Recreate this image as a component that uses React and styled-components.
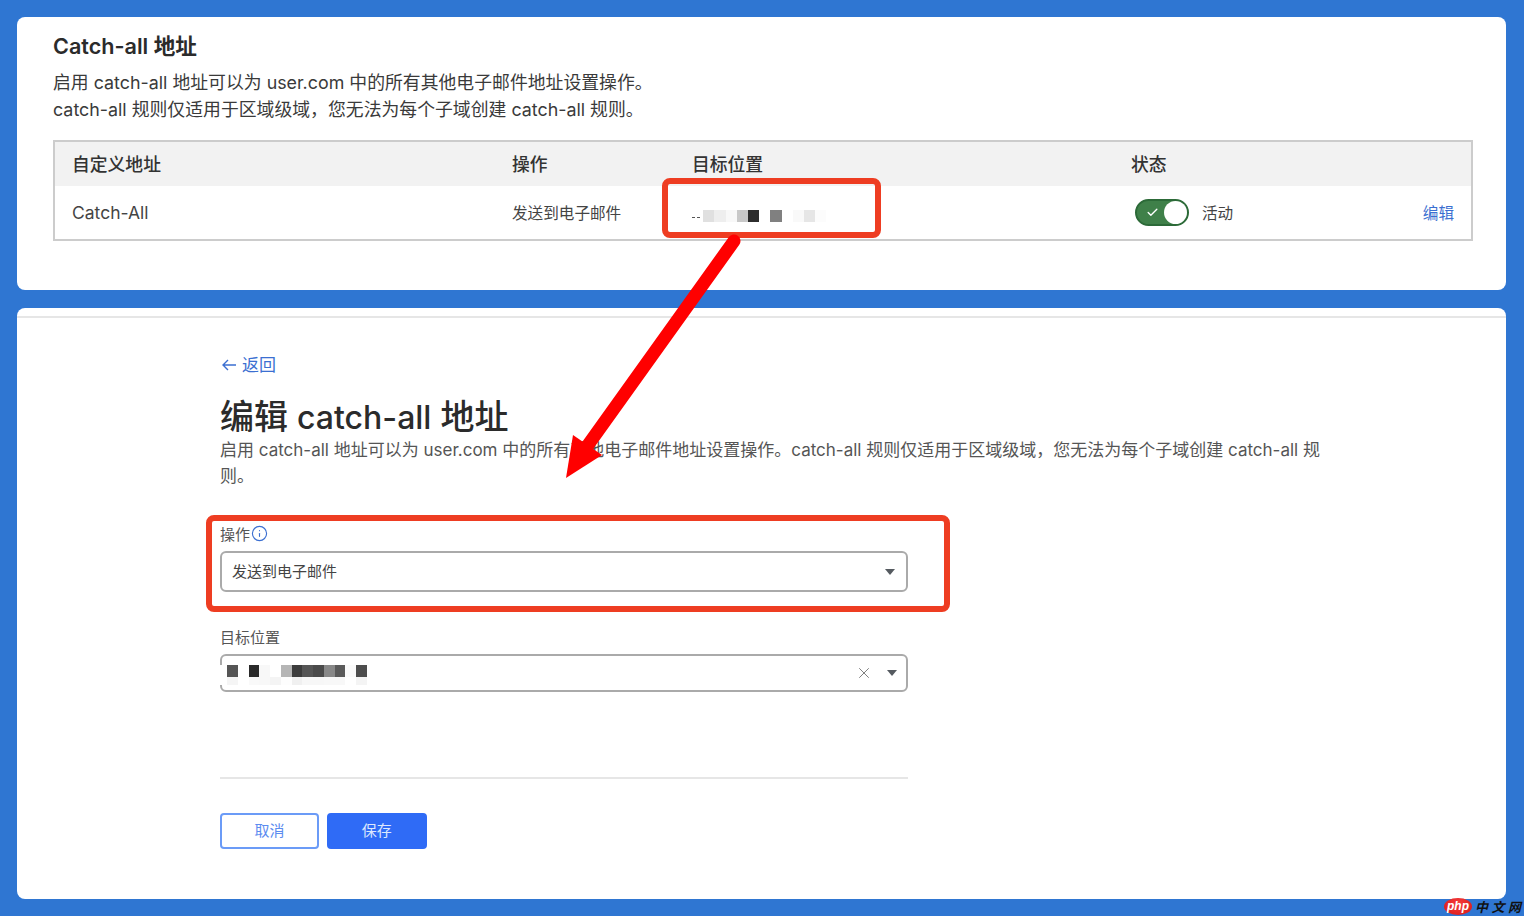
import React from "react";
import styled, { createGlobalStyle } from "styled-components";
import { Check, Info, X } from "lucide-react";

const GlobalStyle = createGlobalStyle`
  html, body { margin: 0; padding: 0; }
  body {
    width: 1524px;
    height: 916px;
    overflow: hidden;
    background: #2f76d2;
    font-family: Inter, "Noto Sans CJK SC", sans-serif;
    color: #333;
  }
`;

const Page = styled.div`
  position: relative;
  width: 1524px;
  height: 916px;
  box-sizing: border-box;
  padding: 17px 18px 17px 17px;
  display: flex;
  flex-direction: column;
  gap: 18px;
  overflow: hidden;
`;

const Card = styled.section`
  background: #fff;
  border-radius: 8px;
  box-sizing: border-box;
  height: ${(p) => p.$height}px;
`;

const TopCard = styled(Card)`
  padding: 14px 33px 0 36px;
`;

const CardTitle = styled.h2`
  margin: 0;
  font-size: 21.6px;
  line-height: 30px;
  font-weight: 600;
  color: #2b2b2b;
`;

const Intro = styled.p`
  margin: 8px 0 0;
  font-size: 17.85px;
  line-height: 27px;
  color: #3a3a3a;
`;

const Table = styled.div`
  margin-top: 17px;
  height: 101px;
  box-sizing: border-box;
  border: 2px solid #ccc;
`;

const Row = styled.div`
  display: grid;
  grid-template-columns: 440px 180px 439px 1fr;
  align-items: center;
  box-sizing: border-box;
  padding: 0 17px ${(p) => (p.$head ? "2px" : "0")};
  height: ${(p) => p.$height}px;
  background: ${(p) => (p.$head ? "#f2f2f2" : "#fff")};
  font-size: ${(p) => (p.$head ? "17.8px" : "15.6px")};
  font-weight: ${(p) => (p.$head ? 500 : 400)};
  color: ${(p) => (p.$head ? "#333" : "#444")};
`;

const AllCell = styled.span`
  font-size: 17.5px;
`;

const CellText = styled.span`
  padding-bottom: 2px;
`;

const StatusCell = styled.div`
  display: flex;
  align-items: center;
  padding-left: 4px;
  gap: 13px;
`;

const Toggle = styled.div`
  width: 54px;
  height: 27px;
  box-sizing: border-box;
  border: 2px solid #2c6a38;
  border-radius: 14px;
  background: #3f8049;
  display: flex;
  align-items: center;
  justify-content: space-between;
  padding: 0 0 0 9px;
  color: #fff;
`;

const Knob = styled.span`
  width: 23px;
  height: 23px;
  border-radius: 50%;
  background: #fff;
`;

const EditLink = styled.a`
  margin-left: auto;
  padding-bottom: 2px;
  color: #3b6fd1;
  font-size: 15.6px;
`;

const Mosaic = styled.div`
  display: flex;
  height: ${(p) => p.$height}px;
  margin-top: ${(p) => p.$top || 0}px;
  margin-left: ${(p) => p.$left || 0}px;
`;

const Cell = styled.span`
  width: ${(p) => p.$w}px;
  height: 100%;
  background: ${(p) => p.$c};
`;

const Dots = styled.span`
  width: 11.3px;
  height: 100%;
  display: flex;
  align-items: center;
  gap: 2px;
  padding-top: 3px;
  box-sizing: border-box;
  &::before, &::after {
    content: "";
    width: 3px;
    height: 1px;
    background: #555;
  }
`;

const BottomCard = styled(Card)`
  padding-top: 8px;
`;

const TopLine = styled.div`
  height: 2px;
  background: #e6e6e6;
`;

const Form = styled.div`
  padding-left: 203px;
  width: 1110px;
`;

const BackLink = styled.a`
  margin-top: 35px;
  display: flex;
  align-items: center;
  gap: 6px;
  height: 22px;
  box-sizing: border-box;
  padding: 0 0 2px 2px;
  font-size: 17px;
  color: #3b6fd1;
  & svg { margin-top: 3px; }
`;

const PageTitle = styled.h1`
  margin: 20px 0 0;
  font-size: 34px;
  line-height: 43px;
  font-weight: 500;
  color: #2b2b2b;
  white-space: nowrap;
`;

const TitleLatin = styled.span`
  font-size: 32px;
  line-height: 1;
`;

const Desc = styled.p`
  margin: -1px 0 0;
  width: 1105px;
  font-size: 17px;
  line-height: 26px;
  color: #555;
`;

const Label = styled.div`
  margin-top: 35px;
  display: flex;
  align-items: center;
  gap: 1px;
  height: 20px;
  box-sizing: border-box;
  padding-bottom: 2px;
  font-size: 15px;
  color: #555;
  & svg { color: #3b6fd1; }
`;

const Select = styled.div`
  margin-top: 7px;
  width: 688px;
  height: ${(p) => p.$height}px;
  box-sizing: border-box;
  border: 2px solid #aaa;
  border-radius: 6px;
  display: flex;
  align-items: center;
  padding: 0 ${(p) => p.$right}px 0 ${(p) => p.$left}px;
  font-size: 15px;
  color: #444;
`;

const SelectValue = styled.div`
  flex: 1;
  padding-bottom: 3px;
`;

const PixelValue = styled.div`
  flex: 1;
  margin-top: 4px;
`;

const Caret = styled.span`
  width: 0;
  height: 0;
  border-left: 5.5px solid transparent;
  border-right: 5.5px solid transparent;
  border-top: 6px solid #555a60;
`;

const Clear = styled.span`
  display: flex;
  margin-right: 14px;
  color: #777;
`;

const Divider = styled.div`
  margin-top: 85px;
  width: 688px;
  height: 2px;
  background: #e6e6e6;
`;

const Actions = styled.div`
  margin-top: 34px;
  display: flex;
  gap: 8px;
`;

const Button = styled.button`
  width: ${(p) => p.$width}px;
  height: 36px;
  box-sizing: border-box;
  border: 2px solid ${(p) => (p.$primary ? "#2f6bf6" : "#6b9bf7")};
  border-radius: 4px;
  background: ${(p) => (p.$primary ? "#2f6bf6" : "#fff")};
  color: ${(p) => (p.$primary ? "#dce7fd" : "#5b8cf0")};
  font-family: inherit;
  font-size: 15px;
  padding: 0 0 3px;
`;

const Highlight = styled.div`
  position: absolute;
  left: ${(p) => p.$x}px;
  top: ${(p) => p.$y}px;
  width: ${(p) => p.$w}px;
  height: ${(p) => p.$h}px;
  box-sizing: border-box;
  border: 6px solid #ee3d22;
  border-radius: 8px;
`;

const ArrowLayer = styled.svg`
  position: absolute;
  left: 0;
  top: 0;
  width: 1524px;
  height: 916px;
  pointer-events: none;
`;

const Watermark = styled.div`
  position: absolute;
  left: 1444px;
  top: 898px;
  display: flex;
  align-items: center;
  gap: 3px;
`;

const PhpBadge = styled.span`
  width: 28px;
  height: 17px;
  border-radius: 50%;
  background: radial-gradient(ellipse at 50% 30%, #f53b3b, #d81717);
  color: #fff;
  font: italic 700 12px/16px "Liberation Sans", sans-serif;
  text-align: center;
`;

const SiteName = styled.span`
  font: italic 700 13px/14px "Noto Sans CJK SC", sans-serif;
  letter-spacing: 3.5px;
  color: #111;
  white-space: nowrap;
`;

const COMMA = "\uFF0C";
const topMosaic = ["#e0e0e0", "#eee", "#f8f8f8", "#c8c8c8", "#2d2d2d", "#fff", "#808080", "#fff", "#f9f9f9", "#e6e6e6", "#fcfcfc"];
const formMosaic = ["#555", "#fff", "#2a2a2a", "#f8f8f8", "#fff", "#b5b5b5", "#3c3c3c", "#555", "#4a4a4a", "#888", "#5a5a5a", "#fafafa", "#4d4d4d"];
const formMosaicPale = ["#f5f5f5", "#fff", "#f9f9f9", "#f8f8f8", "#f4f4f4", "#fdfdfd", "#f0f0f0", "#f7f7f7", "#f7f7f7", "#f8f8f8", "#f8f8f8", "#fff", "#f4f4f4"];

const App = () => {
  return (
    <>
      <GlobalStyle />
      <Page>
        <TopCard $height={273}>
          <CardTitle>Catch-all 地址</CardTitle>
          <Intro>
            启用 catch-all 地址可以为 user.com 中的所有其他电子邮件地址设置操作。
            <br />
            {`catch-all 规则仅适用于区域级域${COMMA}您无法为每个子域创建 catch-all 规则。`}
          </Intro>
          <Table>
            <Row $head $height={44}>
              <span>自定义地址</span>
              <span>操作</span>
              <span>目标位置</span>
              <span>状态</span>
            </Row>
            <Row $height={53}>
              <AllCell>Catch-All</AllCell>
              <CellText>发送到电子邮件</CellText>
              <Mosaic $height={12} $top={7}>
                <Dots />
                {topMosaic.map((c, i) => (
                  <Cell key={i} $w={11.2} $c={c} />
                ))}
              </Mosaic>
              <StatusCell>
                <Toggle>
                  <Check size={13} strokeWidth={2.5} />
                  <Knob />
                </Toggle>
                <CellText>活动</CellText>
                <EditLink>编辑</EditLink>
              </StatusCell>
            </Row>
          </Table>
        </TopCard>

        <BottomCard $height={591}>
          <TopLine />
          <Form>
            <BackLink>
              <svg width="14" height="12" viewBox="0 0 14 12" fill="none" stroke="currentColor" strokeWidth="1.4">
                <path d="M14 6H1M6 1 1 6l5 5" />
              </svg>
              返回
            </BackLink>
            <PageTitle>
              编辑 <TitleLatin>catch-all</TitleLatin> 地址
            </PageTitle>
            <Desc>
              {`启用 catch-all 地址可以为 user.com 中的所有其他电子邮件地址设置操作。catch-all 规则仅适用于区域级域${COMMA}您无法为每个子域创建 catch-all 规则。`}
            </Desc>
            <Label>
              操作
              <Info size={17} strokeWidth={1.6} />
            </Label>
            <Select $height={41} $left={10} $right={11}>
              <SelectValue>发送到电子邮件</SelectValue>
              <Caret />
            </Select>
            <Label>目标位置</Label>
            <Select $height={38} $left={5} $right={9}>
              <PixelValue>
                <Mosaic $height={12} $left={-7}>
                  <Cell $w={7} $c="#fff" />
                  {formMosaic.map((c, i) => (
                    <Cell key={i} $w={10.78} $c={c} />
                  ))}
                </Mosaic>
                <Mosaic $height={8} $left={-7}>
                  <Cell $w={7} $c="#fff" />
                  {formMosaicPale.map((c, i) => (
                    <Cell key={i} $w={10.78} $c={c} />
                  ))}
                </Mosaic>
              </PixelValue>
              <Clear>
                <X size={18} strokeWidth={1.25} />
              </Clear>
              <Caret />
            </Select>
            <Divider />
            <Actions>
              <Button $width={99}>取消</Button>
              <Button $primary $width={99.5}>
                保存
              </Button>
            </Actions>
          </Form>
        </BottomCard>

        <Highlight $x={662} $y={178} $w={219} $h={60} />
        <Highlight $x={206} $y={515} $w={744} $h={97} />
        <ArrowLayer viewBox="0 0 1524 916">
          <line x1="734" y1="241" x2="588" y2="445" stroke="#ff0000" strokeWidth="13" strokeLinecap="round" />
          <polygon points="566,478 573,435 602,455" fill="#ff0000" />
        </ArrowLayer>
        <Watermark>
          <PhpBadge>php</PhpBadge>
          <SiteName>中文网</SiteName>
        </Watermark>
      </Page>
    </>
  );
};

export default App;
